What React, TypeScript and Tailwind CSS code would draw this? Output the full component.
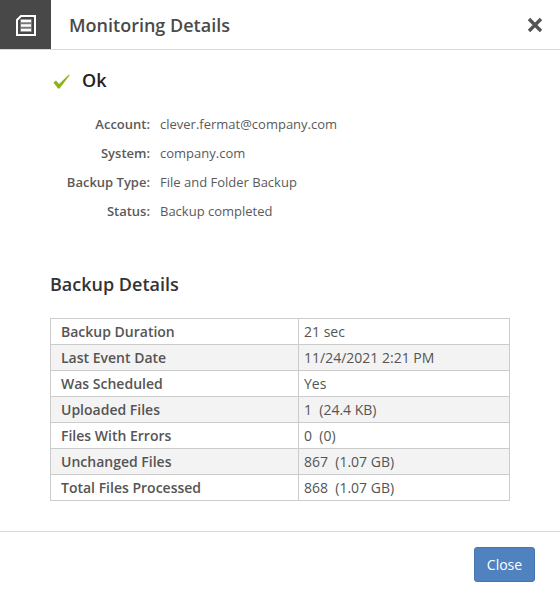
import React from 'react';

const accountInfo = [
  { label: 'Account:', value: 'clever.fermat@company.com' },
  { label: 'System:', value: 'company.com' },
  { label: 'Backup Type:', value: 'File and Folder Backup' },
  { label: 'Status:', value: 'Backup completed' },
];

const backupDetails = [
  { label: 'Backup Duration', value: '21 sec' },
  { label: 'Last Event Date', value: '11/24/2021 2:21 PM' },
  { label: 'Was Scheduled', value: 'Yes' },
  { label: 'Uploaded Files', value: '1  (24.4 KB)' },
  { label: 'Files With Errors', value: '0  (0)' },
  { label: 'Unchanged Files', value: '867  (1.07 GB)' },
  { label: 'Total Files Processed', value: '868  (1.07 GB)' },
];

function DocIcon() {
  return (
    <svg width="20" height="21" viewBox="0 0 20 21" fill="none" className="mt-[2px]">
      <path d="M5 1h14v19H1V5z" stroke="#fff" strokeWidth="2" />
      <rect x="4" y="4" width="12" height="13" fill="#7a7a7a" />
      <path d="M5 6h10M5 10.5h10M5 15h10" stroke="#fff" strokeWidth="2.4" />
    </svg>
  );
}

export default function App() {
  return (
    <div className="w-[560px] h-[597px] bg-white flex flex-col font-['Open_Sans',sans-serif] text-[#555]">
      <div className="h-[50px] flex items-center border-b border-[#d9d9d9] shrink-0">
        <div className="w-[51px] h-[49px] bg-[#484848] flex items-center justify-center">
          <DocIcon />
        </div>
        <h1 className="ml-[18px] text-[18px] font-semibold text-[#4a4a4a] leading-none">Monitoring Details</h1>
        <button className="ml-auto mr-[17px]">
          <svg width="16" height="16" viewBox="0 0 16 16" className="block">
            <path d="M2 2l12 12M14 2L2 14" stroke="#555" strokeWidth="3.4" />
          </svg>
        </button>
      </div>

      <div className="flex-1 px-[50px]">
        <div className="flex items-center h-[30px] mt-[15px]">
          <svg width="17" height="15" viewBox="0 0 17 15" className="ml-[3px] mt-[2px]">
            <path d="M0.5 8.5L3 6.5L6 10L16 0.5L16.5 1.5L6.5 14.5H5z" fill="#8fb213" />
          </svg>
          <span className="ml-[12px] text-[18px] font-semibold text-[#222]">Ok</span>
        </div>

        <div className="mt-[15px] flex flex-col">
          {accountInfo.map(row => (
            <div key={row.label} className="h-[29px] flex items-center text-[13px]">
              <span className="w-[100px] text-right font-semibold text-[#5a5a5a]">{row.label}</span>
              <span className="ml-[10px] text-[#5a5a5a]">{row.value}</span>
            </div>
          ))}
        </div>

        <h2 className="mt-[46px] text-[18px] font-semibold text-[#333] leading-[24px]">Backup Details</h2>

        <table className="mt-[22px] w-[460px] border-collapse table-fixed text-[14px]">
          <tbody>
            {backupDetails.map((row, index) => (
              <tr key={row.label} className={index % 2 === 1 ? 'h-[26px] bg-[#f3f3f3]' : 'h-[26px] bg-white'}>
                <td className="w-[248px] border border-[#cccccc] px-[10px] py-0 font-semibold text-[#555] leading-none">{row.label}</td>
                <td className="border border-[#cccccc] px-[5px] py-0 text-[#555] leading-none whitespace-pre">{row.value}</td>
              </tr>
            ))}
          </tbody>
        </table>
      </div>

      <div className="h-[66px] border-t border-[#d9d9d9] flex justify-end items-start shrink-0 pr-[25px] pt-[15px]">
        <button className="w-[61px] h-[35px] bg-[#4f82bf] border border-[#4775ad] rounded-[3px] text-[14px] text-white">Close</button>
      </div>
    </div>
  );
}
